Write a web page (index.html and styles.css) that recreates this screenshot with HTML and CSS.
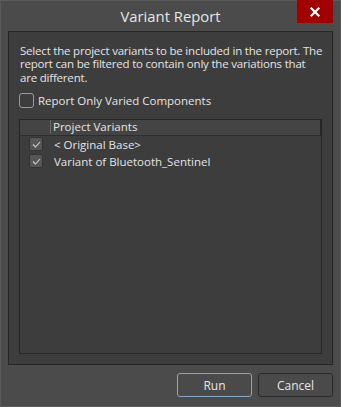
FILE: index.html
```html
<!DOCTYPE html>
<html>
<head>
<meta charset="utf-8">
<link rel="stylesheet" href="styles.css">
</head>
<body>
<div class="window">
  <div class="titlebar">
    <div class="title">Variant Report</div>
    <div class="close">
      <svg width="10" height="10" viewBox="0 0 10 10"><path d="M1.5 1.5 L8.5 8.5 M8.5 1.5 L1.5 8.5" stroke="#fff" stroke-width="2.2" stroke-linecap="square"/></svg>
    </div>
  </div>
  <div class="panel">
    <p class="desc">Select the project variants to be included in the report. The report can be filtered to contain only the variations that are different.</p>
    <label class="opt"><span class="cb"></span><span>Report Only Varied Components</span></label>
    <div class="list">
      <div class="head"><span class="hcheck"></span><span class="hcol">Project Variants</span><span class="hrest"></span></div>
      <div class="row"><span class="rcheck"><span class="cbs"><svg width="9" height="7" viewBox="0 0 9 7"><path d="M1 3.5 L3.5 6 L8 1" fill="none" stroke="#d0d0d0" stroke-width="1.1"/></svg></span></span><span class="rtext">&lt; Original Base&gt;</span></div>
      <div class="row"><span class="rcheck"><span class="cbs"><svg width="9" height="7" viewBox="0 0 9 7"><path d="M1 3.5 L3.5 6 L8 1" fill="none" stroke="#d0d0d0" stroke-width="1.1"/></svg></span></span><span class="rtext">Variant of Bluetooth_Sentinel</span></div>
    </div>
  </div>
  <div class="footer">
    <button class="btn run">Run</button>
    <button class="btn">Cancel</button>
  </div>
</div>
</body>
</html>
```
FILE: styles.css
```css
html, body {
  margin: 0;
  padding: 0;
  background: #4b4b4b;
}
.window {
  width: 341px;
  height: 407px;
  box-sizing: border-box;
  border: 1px solid #5a5a5a;
  background: #4b4b4b;
  display: flex;
  flex-direction: column;
  font-family: "Open Sans", "Noto Sans", sans-serif;
  color: #e4e4e4;
  position: relative;
}
.titlebar {
  height: 30px;
  position: relative;
  display: flex;
  justify-content: center;
  align-items: center;
}
.title {
  font-size: 14.8px;
  color: #e6e6e6;
  margin-top: -1px;
}
.close {
  position: absolute;
  right: 7px;
  top: -1px;
  width: 36px;
  height: 23px;
  background: #a00000;
  display: flex;
  align-items: center;
  justify-content: center;
}
.panel {
  margin: 0 7px;
  height: 334px;
  box-sizing: border-box;
  border: 1px solid #262626;
  background: #3d3d3d;
  padding: 12px 10px 10px 10px;
  display: flex;
  flex-direction: column;
}
.desc {
  margin: 0 -3px 0 1px;
  font-size: 11.5px;
  line-height: 13.3px;
  letter-spacing: -0.2px;
  color: #e4e4e4;
}
.opt {
  display: flex;
  align-items: center;
  margin-top: 9px;
  font-size: 11.5px;
  height: 15px;
}
.cb {
  width: 15px;
  height: 15px;
  box-sizing: border-box;
  border: 1px solid #9a9a9a;
  border-radius: 3px;
  margin-right: 4px;
  background: #3d3d3d;
}
.list {
  margin-top: 11px;
  flex: 1;
  border: 1px solid #262626;
  background: #3d3d3d;
  display: flex;
  flex-direction: column;
}
.head {
  height: 15px;
  display: flex;
  align-items: center;
  background: #444444;
  border-bottom: 1px solid #2e2e2e;
  font-size: 11.5px;
}
.hcheck {
  width: 30px;
  height: 15px;
}
.hcol {
  border-left: 1px solid #6a6a6a;
  padding-left: 2px;
  line-height: 14px;
  flex: 1;
  height: 14px;
}
.hrest {
  width: 0;
  height: 15px;
  border-left: 1px solid #262626;
}
.row {
  height: 17px;
  display: flex;
  align-items: center;
  font-size: 11.5px;
}
.rcheck {
  width: 33px;
  display: flex;
  justify-content: flex-end;
}
.cbs {
  width: 14px;
  height: 14px;
  box-sizing: border-box;
  border: 1px solid #333;
  border-radius: 2px;
  background: #565656;
  display: flex;
  align-items: center;
  justify-content: center;
  margin-right: 10px;
}
.rtext {
  padding-left: 1px;
}
.footer {
  flex: 1;
  display: flex;
  justify-content: flex-end;
  align-items: flex-start;
  padding: 8px 7px 0 0;
  gap: 6px;
}
.btn {
  width: 75px;
  height: 24px;
  box-sizing: border-box;
  background: #4a4a4a;
  border: 1px solid #2a2a2a;
  border-radius: 3px;
  color: #e6e6e6;
  font-family: "Open Sans", "Noto Sans", sans-serif;
  font-size: 12px;
  padding: 0;
}
.btn.run {
  border-color: #86a6c6;
}
```
